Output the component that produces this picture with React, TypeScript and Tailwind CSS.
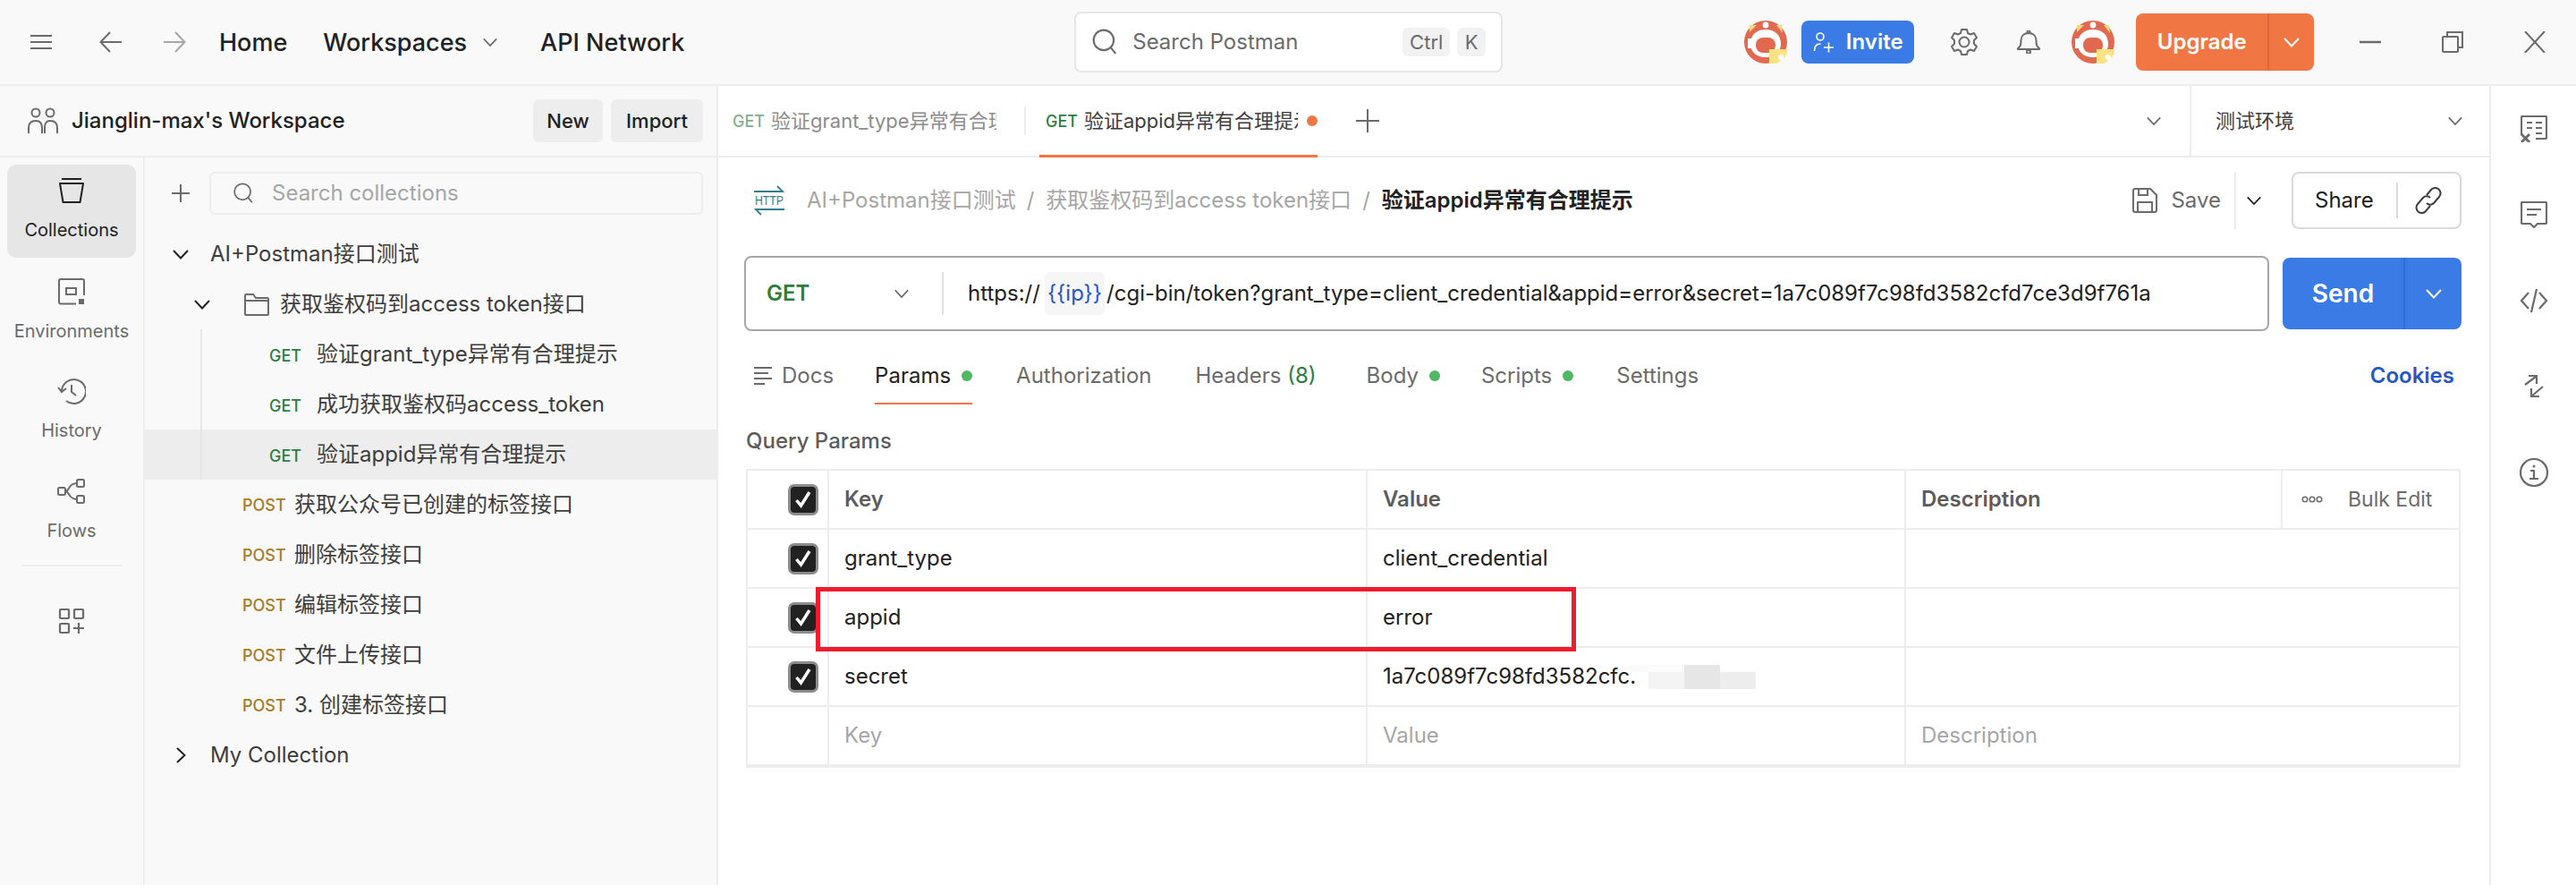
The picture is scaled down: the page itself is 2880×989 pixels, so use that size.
import React from "react";

const FONT = "font-['Inter','Noto_Sans_CJK_SC',sans-serif]";

function Ico({ size = 32, className = "", vb = 32, sw = 2, children }: { size?: number; className?: string; vb?: number; sw?: number; children: React.ReactNode }) {
  return (
    <svg width={size} height={size} viewBox={`0 0 ${vb} ${vb}`} fill="none" stroke="currentColor" strokeWidth={sw} className={`shrink-0 ${className}`}>
      {children}
    </svg>
  );
}

const Chevron = ({ className = "text-[#6b6b6b]", size = 20 }: { className?: string; size?: number }) => (
  <Ico size={size} vb={20} sw={2} className={className}>
    <path d="M2 6l8 8.500L18 6" />
  </Ico>
);

const SearchIco = ({ size = 28, className = "text-[#6b6b6b]" }: { size?: number; className?: string }) => (
  <Ico size={size} vb={28} sw={2} className={className}>
    <circle cx="13" cy="12" r="10.500" />
    <path d="M20.500 20l5 6" />
  </Ico>
);

function Avatar() {
  return (
    <svg width="48" height="48" viewBox="0 0 48 48" className="shrink-0">
      <circle cx="24" cy="24" r="24" fill="#e0694f" />
      <path d="M6 5h8L6 13zM42 5h-6l7 9z" fill="#f6d77c" />
      <circle cx="24" cy="5" r="3.400" fill="#fff" />
      <path d="M24 10c-10 0-17 6-17 16 0 9 7 15 17 15s17-6 17-15c0-10-7-16-17-16z" fill="#fff" />
      <rect x="13" y="19" width="22" height="17" rx="8" fill="#e0694f" />
      <path d="M4 20h5v11H4z" fill="#fff" />
      <path d="M28 32h20v4c-2 5-6 9-12 12h-8z" fill="#fbe282" />
      <circle cx="41" cy="41" r="3" fill="#fff" />
    </svg>
  );
}

function HeaderBar() {
  return (
    <header className="flex h-[96px] shrink-0 items-center border-b-2 border-[#ededed] bg-[#f9f9f9] text-[#212121]">
      <Ico size={24} vb={24} className="ml-[34px] text-[#6b6b6b]">
        <path d="M0 5h24M0 12h24M0 19h24" />
      </Ico>
      <Ico size={26} vb={26} className="ml-[53px] text-[#6b6b6b]">
        <path d="M25 13H2M12 2L1.500 13 12 24" />
      </Ico>
      <Ico size={26} vb={26} className="ml-[45px] text-[#a6a6a6]">
        <path d="M1 13h23M14 2l10.500 11L14 24" />
      </Ico>
      <span className="ml-[37px] pt-[2px] text-[27px] font-medium">Home</span>
      <span className="ml-[40px] pt-[2px] text-[27px] font-medium">Workspaces</span>
      <Chevron className="ml-[17px] text-[#6b6b6b]" size={18} />
      <span className="ml-[47px] pt-[2px] text-[27px] font-medium">API Network</span>

      <div className="ml-[436px] flex h-[68px] w-[479px] items-center rounded-[8px] border-2 border-[#e6e6e6] bg-white pl-[17px] pr-[17px]">
        <SearchIco size={30} />
        <span className="ml-[16px] text-[24px] text-[#6b6b6b]">Search Postman</span>
        <span className="ml-auto flex h-[32px] w-[53px] items-center justify-center rounded-[6px] bg-[#f2f2f2] text-[22px] text-[#6b6b6b]">Ctrl</span>
        <span className="ml-[8px] flex h-[32px] w-[32px] items-center justify-center rounded-[6px] bg-[#f2f2f2] text-[22px] text-[#6b6b6b]">K</span>
      </div>

      <div className="ml-[270px]"><Avatar /></div>
      <div className="ml-[16px] flex h-[48px] w-[126px] items-center justify-center gap-[13px] rounded-[8px] bg-[#3a7be5] text-[24px] font-semibold text-white">
        <Ico size={24} vb={24} sw={1.600}>
          <circle cx="8" cy="6" r="4" />
          <path d="M1.500 22c0-5 2.500-8 7-8M12 18h11M17.500 12.500v11" />
        </Ico>
        Invite
      </div>
      <Ico size={32} vb={32} className="ml-[40px] text-[#6b6b6b]" sw={2}>
        <circle cx="16" cy="16" r="5.500" />
        <path d="M13 2h6l1 4 3 1.500 4-1.500 3 5-3 3v4l3 3-3 5-4-1.500-3 1.500-1 4h-6l-1-4-3-1.500-4 1.500-3-5 3-3v-4l-3-3 3-5 4 1.500 3-1.500z" strokeLinejoin="round" />
      </Ico>
      <Ico size={26} vb={26} className="ml-[43px] text-[#6b6b6b]" sw={2}>
        <path d="M1 20c3-2 3.500-4 3.500-9C4.500 6 8 3 13 3s8.500 3 8.500 8c0 5 .5 7 3.500 9v1H1z" strokeLinejoin="round" />
        <circle cx="13" cy="1.800" r="1.500" />
        <circle cx="13" cy="24" r="2" />
      </Ico>
      <div className="ml-[35px]"><Avatar /></div>
      <div className="ml-[24px] flex h-[64px] w-[199px] items-center rounded-[8px] bg-[#f07744] text-[24px] font-semibold text-white">
        <span className="flex w-[147px] justify-center">Upgrade</span>
        <span className="flex h-full flex-1 items-center justify-center border-l-2 border-[#dc6a39]">
          <Chevron className="text-white" size={20} />
        </span>
      </div>
      <Ico size={24} vb={24} className="ml-[51px] text-[#6b6b6b]" sw={2.500}><path d="M0 12h24" /></Ico>
      <Ico size={24} vb={24} className="ml-[68px] text-[#6b6b6b]" sw={2}>
        <rect x="1" y="6" width="17" height="17" rx="1" />
        <path d="M6 5V1h17v17h-4" />
      </Ico>
      <Ico size={24} vb={24} className="ml-[68px] text-[#6b6b6b]" sw={2}><path d="M1 0l22 24M23 0L1 24" /></Ico>
    </header>
  );
}

function NavItem({ label, active, icon }: { label: string; active?: boolean; icon: React.ReactNode }) {
  return (
    <div className={`flex h-[104px] w-[144px] flex-col items-center pt-[8px] rounded-[10px] text-[20px] leading-[28px] ${active ? "bg-[#e6e6e6] text-[#212121]" : "text-[#6b6b6b]"}`}>
      <div className="flex h-[42px] items-center justify-center">{icon}</div>
      <span className="mt-[9px]">{label}</span>
    </div>
  );
}

function LeftNav() {
  return (
    <nav className="flex w-[162px] shrink-0 flex-col items-center border-r-2 border-[#ededed] pt-[8px]">
      <NavItem label="Collections" active icon={
        <Ico size={30} vb={30} className="text-[#212121]">
          <path d="M4 2h22M2 7h26l-3.500 21h-19z" strokeLinejoin="round" />
        </Ico>} />
      <div className="mt-[9px]">
        <NavItem label="Environments" icon={
          <Ico size={30} vb={30} className="text-[#6b6b6b]">
            <path d="M20 28.500H3a2 2 0 0 1-2-2V3a2 2 0 0 1 2-2h24a2 2 0 0 1 2 2v16" />
            <rect x="9" y="11" width="11" height="7" />
            <rect x="23" y="23" width="6" height="6" fill="currentColor" stroke="none" />
          </Ico>} />
      </div>
      <div className="mt-[7px]">
        <NavItem label="History" icon={
          <Ico size={32} vb={32} className="text-[#6b6b6b]">
            <path d="M5 16a13.500 13.500 0 1 1 5 11M1 12l4 5 5-4M16 9v8l5 4" />
          </Ico>} />
      </div>
      <div className="mt-[8px]">
        <NavItem label="Flows" icon={
          <Ico size={32} vb={32} className="text-[#6b6b6b]">
            <rect x="1" y="12" width="8" height="8" rx="1.500" />
            <rect x="22" y="3" width="8" height="8" rx="1.500" />
            <rect x="22" y="21" width="8" height="8" rx="1.500" />
            <path d="M9 16c5 0 3-9 13-9M9 16c5 0 3 9 13 9" />
          </Ico>} />
      </div>
      <div className="mt-[7px] h-[2px] w-[112px] bg-[#ededed]" />
      <Ico size={30} vb={30} className="mt-[46px] text-[#6b6b6b]" sw={2.200}>
        <rect x="2" y="2" width="10" height="10" rx="1" />
        <rect x="18" y="2" width="10" height="10" rx="1" />
        <rect x="2" y="18" width="10" height="10" rx="1" />
        <path d="M17 23h12M23 17v12" />
      </Ico>
    </nav>
  );
}

function Method({ m, w }: { m: "GET" | "POST"; w: string }) {
  return <span className={`${w} shrink-0 text-[18px] font-medium ${m === "GET" ? "text-[#2c7d3f]" : "text-[#a87b23]"}`}>{m}</span>;
}

function ReqRow({ label, active }: { label: string; active?: boolean }) {
  return (
    <div className={`flex h-[56px] items-center text-[24px] text-[#3d3d3d] ${active ? "bg-[#ededed]" : ""}`}>
      <div className="ml-[62px] h-full w-[2px] bg-[#e6e6e6]" />
      <span className="ml-[75px]"><Method m="GET" w="inline-block w-[53px]" /></span>
      <span className="whitespace-nowrap">{label}</span>
    </div>
  );
}

function PostRow({ label }: { label: string }) {
  return (
    <div className="flex h-[56px] items-center pl-[109px] text-[24px] text-[#3d3d3d]">
      <Method m="POST" w="w-[58px]" />
      <span className="whitespace-nowrap">{label}</span>
    </div>
  );
}

function CollectionsPanel() {
  return (
    <div className="flex min-w-0 flex-1 flex-col bg-[#f9f9f9]">
      <div className="flex h-[80px] shrink-0 items-center pl-[28px] pr-[15px]">
        <Ico size={24} vb={24} className="text-[#6b6b6b]" sw={2}><path d="M12 2v20M2 12h20" /></Ico>
        <div className="ml-[20px] flex h-[48px] flex-1 items-center rounded-[6px] border-2 border-[#ededed] pl-[24px] text-[24px] text-[#a6a6a6]">
          <SearchIco size={24} />
          <span className="ml-[20px]">Search collections</span>
        </div>
      </div>
      <div className="flex h-[56px] items-center text-[24px] text-[#3d3d3d]">
        <Chevron className="ml-[30px] text-[#212121]" size={20} />
        <span className="ml-[23px]">AI+Postman接口测试</span>
      </div>
      <div className="flex h-[56px] items-center text-[24px] text-[#3d3d3d]">
        <Chevron className="ml-[54px] text-[#212121]" size={20} />
        <Ico size={28} vb={28} className="ml-[37px] text-[#6b6b6b]"><path d="M1 25V4a1 1 0 0 1 1-1h8l3 4h13a1 1 0 0 1 1 1v17a1 1 0 0 1-1 1H2a1 1 0 0 1-1-1zM1 10h26" /></Ico>
        <span className="ml-[12px] whitespace-nowrap">获取鉴权码到access token接口</span>
      </div>
      <ReqRow label="验证grant_type异常有合理提示" />
      <ReqRow label="成功获取鉴权码access_token" />
      <ReqRow label="验证appid异常有合理提示" active />
      <PostRow label="获取公众号已创建的标签接口" />
      <PostRow label="删除标签接口" />
      <PostRow label="编辑标签接口" />
      <PostRow label="文件上传接口" />
      <PostRow label="3. 创建标签接口" />
      <div className="flex h-[56px] items-center text-[24px] text-[#3d3d3d]">
        <Ico size={20} vb={20} className="ml-[30px] text-[#212121]"><path d="M6 2l8.500 8L6 18" /></Ico>
        <span className="ml-[23px]">My Collection</span>
      </div>
    </div>
  );
}

function LeftColumn() {
  return (
    <aside className="flex w-[803px] shrink-0 flex-col border-r-2 border-[#ededed] bg-[#f9f9f9]">
      <div className="flex h-[80px] shrink-0 items-center border-b-2 border-[#ededed] pl-[31px] pr-[15px]">
        <Ico size={34} vb={34} className="text-[#6b6b6b]" sw={2}>
          <circle cx="9" cy="8" r="4.500" />
          <circle cx="25" cy="8" r="4.500" />
          <path d="M1 31v-6c0-5 3-8 8-8s7 3 7 8v6M19 31v-6c0-5 1-8 6-8s8 3 8 8v6" />
        </Ico>
        <span className="ml-[15px] text-[24px] font-medium text-[#212121]">Jianglin-max's Workspace</span>
        <span className="ml-auto flex h-[48px] w-[78px] items-center justify-center rounded-[6px] bg-[#ededed] text-[22px] font-medium text-[#212121]">New</span>
        <span className="ml-[9px] flex h-[48px] w-[103px] items-center justify-center rounded-[6px] bg-[#ededed] text-[22px] font-medium text-[#212121]">Import</span>
      </div>
      <div className="flex flex-1">
        <LeftNav />
        <CollectionsPanel />
      </div>
    </aside>
  );
}

function TabsRow() {
  return (
    <div className="flex h-[80px] shrink-0 items-center border-b-2 border-[#ededed]">
      <div className="ml-[16px] flex items-center text-[22px] text-[#8c8c8c]">
        <span className="w-[43px] text-[18px] font-medium text-[#7fb08a]">GET</span>
        <span className="w-[252px] overflow-hidden whitespace-nowrap">验证grant_type异常有合理提示</span>
      </div>
      <div className="ml-[31px] h-[32px] w-[2px] bg-[#ededed]" />
      <div className="relative ml-[15px] flex h-[78px] w-[311px] items-center pl-[7px] text-[22px] text-[#3d3d3d]">
        <span className="w-[43px] text-[18px] font-medium text-[#2c7d3f]">GET</span>
        <span className="w-[239px] overflow-hidden whitespace-nowrap">验证appid异常有合理提示</span>
        <span className="ml-[10px] h-[12px] w-[12px] rounded-full bg-[#f07744]" />
        <span className="absolute bottom-[-2px] left-0 right-0 h-[3px] bg-[#f07744]" />
      </div>
      <Ico size={26} vb={26} className="ml-[43px] text-[#6b6b6b]"><path d="M13 0v26M0 13h26" /></Ico>
      <Chevron className="ml-[857px] text-[#6b6b6b]" size={18} />
      <div className="ml-[31px] flex h-full flex-1 items-center border-l-2 border-[#ededed] pl-[27px] pr-[29px] text-[22px] text-[#3d3d3d]">
        <span>测试环境</span>
        <Chevron className="ml-auto text-[#6b6b6b]" size={18} />
      </div>
    </div>
  );
}

function BreadcrumbRow() {
  return (
    <div className="flex h-[96px] shrink-0 items-center pl-[39px]">
      <svg width="36" height="34" viewBox="0 0 36 34" className="shrink-0 text-[#2f7f90]" fill="none" stroke="currentColor" strokeWidth="1.800">
        <path d="M1 7h32L27 1M35 27H3l6 6" />
        <text x="18" y="22" textAnchor="middle" fontSize="15" fontFamily="Liberation Sans" fill="currentColor" stroke="none" textLength="32" lengthAdjust="spacingAndGlyphs">HTTP</text>
      </svg>
      <span className="ml-[24px] whitespace-nowrap text-[24px] text-[#a6a6a6]">AI+Postman接口测试</span>
      <span className="ml-[12px] text-[24px] text-[#a6a6a6]">/</span>
      <span className="ml-[13px] whitespace-nowrap text-[24px] text-[#a6a6a6]">获取鉴权码到access token接口</span>
      <span className="ml-[12px] text-[24px] text-[#a6a6a6]">/</span>
      <span className="ml-[13px] whitespace-nowrap text-[24px] font-semibold text-[#212121]">验证appid异常有合理提示</span>
      <Ico size={28} vb={28} className="ml-auto text-[#6b6b6b]">
        <path d="M1 3a2 2 0 0 1 2-2h17l7 7v17a2 2 0 0 1-2 2H3a2 2 0 0 1-2-2zM7 1v7h10V1M6 27V16h16v11" />
      </Ico>
      <span className="ml-[15px] text-[24px] text-[#6b6b6b]">Save</span>
      <div className="ml-[15px] flex h-[64px] w-[64px] items-center border-l-2 border-[#ededed] pl-[11px]"><Chevron className="text-[#212121]" size={18} /></div>
      <div className="mr-[31px] flex h-[64px] w-[190px] items-center rounded-[8px] border-2 border-[#d9d9d9] pl-[24px] text-[24px] text-[#212121]">
        <span>Share</span>
        <span className="ml-[25px] h-[40px] w-[2px] bg-[#d9d9d9]" />
        <Ico size={30} vb={30} className="ml-[19px] text-[#3d3d3d]">
          <path d="M13 9l5-6a6 6 0 0 1 9 8l-6 7a5.500 5.500 0 0 1-8 0M17 21l-5 6a6 6 0 0 1-9-8l6-7a5.500 5.500 0 0 1 8 0" />
        </Ico>
      </div>
    </div>
  );
}

function UrlRow() {
  return (
    <div className="mt-[14px] flex h-[84px] shrink-0 items-center pl-[29px]">
      <div className="flex h-[84px] w-[1705px] items-center rounded-[8px] border-2 border-[#a6a6a6] text-[24px]">
        <span className="ml-[23px] w-[142px] font-semibold text-[#2c7d3f]">GET</span>
        <Chevron className="text-[#6b6b6b]" size={18} />
        <span className="ml-[36px] h-[48px] w-[2px] bg-[#e0e0e0]" />
        <span className="ml-[27px] whitespace-nowrap text-[#212121]">https://</span>
        <span className="ml-[5px] flex h-[48px] items-center rounded-[6px] bg-[#f6f6f6] px-[3px] text-[#2557c5]">{"{{ip}}"}</span>
        <span className="ml-[2px] whitespace-nowrap text-[#212121]">/cgi-bin/token?grant_type=client_credential&amp;appid=error&amp;secret=1a7c089f7c98fd3582cfd7ce3d9f761a</span>
      </div>
      <div className="ml-[15px] flex h-[80px] w-[200px] items-center rounded-[8px] bg-[#3a7be5] text-[28px] font-semibold text-white">
        <span className="flex w-[135px] justify-center">Send</span>
        <span className="flex h-full flex-1 items-center justify-center border-l-2 border-[#2f6ed4]"><Chevron className="text-white" size={20} /></span>
      </div>
    </div>
  );
}

const Dot = () => <span className="ml-[12px] inline-block h-[12px] w-[12px] rounded-full bg-[#4fb861]" />;

function ReqTabs() {
  return (
    <div className="flex h-[100px] shrink-0 items-center pl-[40px] pr-[39px] text-[24px] text-[#6b6b6b]">
      <Ico size={22} vb={22} className="text-[#6b6b6b]"><path d="M0 2h20M0 8h16M0 14h20M0 20h12" /></Ico>
      <span className="ml-[9px]">Docs</span>
      <span className="relative ml-[46px] flex h-full items-center text-[#212121]">
        Params<Dot />
        <span className="absolute bottom-[18px] left-0 right-0 h-[2px] bg-[#f07744]" />
      </span>
      <span className="ml-[49px]">Authorization</span>
      <span className="ml-[49px]">Headers <span className="text-[#2c7d3f]">(8)</span></span>
      <span className="ml-[56px] flex items-center">Body<Dot /></span>
      <span className="ml-[46px] flex items-center">Scripts<Dot /></span>
      <span className="ml-[48px]">Settings</span>
      <span className="ml-auto font-semibold text-[#2557c5]">Cookies</span>
    </div>
  );
}

const Check = () => (
  <span className="flex h-[35px] w-[34px] items-center justify-center rounded-[7px] border-[3px] border-[#8c8c8c] bg-[#212121]">
    <svg width="22" height="22" viewBox="0 0 22 22" fill="none" stroke="#fff" strokeWidth="3.500"><path d="M3.500 12l5 6L18 3" /></svg>
  </span>
);

function Cell({ children, className = "" }: { children?: React.ReactNode; className?: string }) {
  return <div className={`relative flex h-[64px] min-w-0 items-center border-r-2 border-[#ededed] pl-[17px] last:border-r-0 ${className}`}>{children}</div>;
}

function TableRow({ k, v, checked = true, tone = "text-[#212121]", desc, head }: { k: string; v: React.ReactNode; checked?: boolean; tone?: string; desc?: string; head?: boolean }) {
  return (
    <div className={`grid grid-cols-[91px_602px_602px_1fr] border-b-2 border-[#ededed] last:border-b-0 text-[24px] ${tone}`}>
      <Cell className="justify-end pr-[10px]">{checked && <Check />}</Cell>
      <Cell>{k}</Cell>
      <Cell>{v}</Cell>
      <Cell>
        {desc}
        {head && (
          <div className="ml-auto flex h-full w-[199px] items-center border-l-2 border-[#ededed] pl-[21px] font-normal text-[#6b6b6b] text-[23px]">
            <svg width="24" height="10" viewBox="0 0 24 10" fill="none" stroke="#6b6b6b" strokeWidth="1.500"><circle cx="4" cy="5" r="2.800" /><circle cx="12" cy="5" r="2.800" /><circle cx="20" cy="5" r="2.800" /></svg>
            <span className="ml-[28px]">Bulk Edit</span>
          </div>
        )}
      </Cell>
    </div>
  );
}

function ParamsTable() {
  return (
    <div className="relative ml-[31px] w-[1917px] rounded-[1px] border-2 border-[#ededed]">
      <TableRow head k="Key" v="Value" desc="Description" tone="font-semibold text-[#5c5c5c]" />
      <TableRow k="grant_type" v="client_credential" />
      <TableRow k="appid" v="error" />
      <TableRow k="secret" v={
        <>
          <span className="whitespace-nowrap">1a7c089f7c98fd3582cfc.</span>
          <span className="absolute left-[294px] top-[19px] h-[8px] w-[60px] bg-[#fbfbfb]" />
          <span className="absolute left-[314px] top-[27px] h-[19px] w-[40px] bg-[#f4f4f4]" />
          <span className="absolute left-[354px] top-[19px] h-[27px] w-[40px] bg-[#e6e6e6]" />
          <span className="absolute left-[394px] top-[27px] h-[19px] w-[40px] bg-[#ededed]" />
        </>
      } />
      <TableRow checked={false} k="Key" v="Value" desc="Description" tone="text-[#a6a6a6]" />
      <div className="absolute left-[76px] top-[130px] h-[72px] w-[850px] border-[5px] border-[#ee1c2e]" />
    </div>
  );
}

function RailSlot({ children }: { children: React.ReactNode }) {
  return <div className="flex h-[96px] items-center justify-center">{children}</div>;
}

function RightRail() {
  return (
    <aside className="flex w-[97px] shrink-0 flex-col items-center border-l-2 border-[#ededed] text-[#6b6b6b]">
      <RailSlot>
        <Ico size={30} vb={30} sw={2.200}>
          <path d="M1 22V2a1 1 0 0 1 1-1h26a1 1 0 0 1 1 1v23a1 1 0 0 1-1 1h-11M7 8h6M17 8h7M7 14h6M17 14h7M17 20h7" />
          <path d="M1 21l9 9M10 21l-9 9" strokeWidth="3" />
        </Ico>
      </RailSlot>
      <RailSlot>
        <Ico size={30} vb={30} sw={2.200}>
          <path d="M2 1h26a1 1 0 0 1 1 1v22a1 1 0 0 1-1 1H19l-4 4-4-4H2a1 1 0 0 1-1-1V2a1 1 0 0 1 1-1zM7 9h16M7 15h11" />
        </Ico>
      </RailSlot>
      <RailSlot>
        <Ico size={32} vb={32} sw={2.200}>
          <path d="M10 7l-8 9 8 9M22 7l8 9-8 9M19 3l-6 26" />
        </Ico>
      </RailSlot>
      <RailSlot>
        <Ico size={26} vb={26} sw={2.200}>
          <path d="M3 11L15 2M7 1h9v9M23 13l-13 11M10 15v9h9" />
        </Ico>
      </RailSlot>
      <RailSlot>
        <Ico size={32} vb={32} sw={2.200}>
          <circle cx="16" cy="16" r="15" />
          <circle cx="16" cy="9" r="1.500" fill="currentColor" stroke="none" />
          <path d="M12 14h4v9M11 23h10" />
        </Ico>
      </RailSlot>
    </aside>
  );
}

export default function App() {
  return (
    <div className={`flex h-[989px] w-[2880px] flex-col overflow-hidden bg-white ${FONT}`}>
      <HeaderBar />
      <div className="flex flex-1">
        <LeftColumn />
        <main className="flex min-w-0 flex-1 flex-col">
          <TabsRow />
          <BreadcrumbRow />
          <UrlRow />
          <ReqTabs />
          <div className="ml-[31px] flex h-[46px] items-center text-[24px] font-medium text-[#5c5c5c]">Query Params</div>
          <div className="h-[8px]" />
          <ParamsTable />
        </main>
        <RightRail />
      </div>
    </div>
  );
}
